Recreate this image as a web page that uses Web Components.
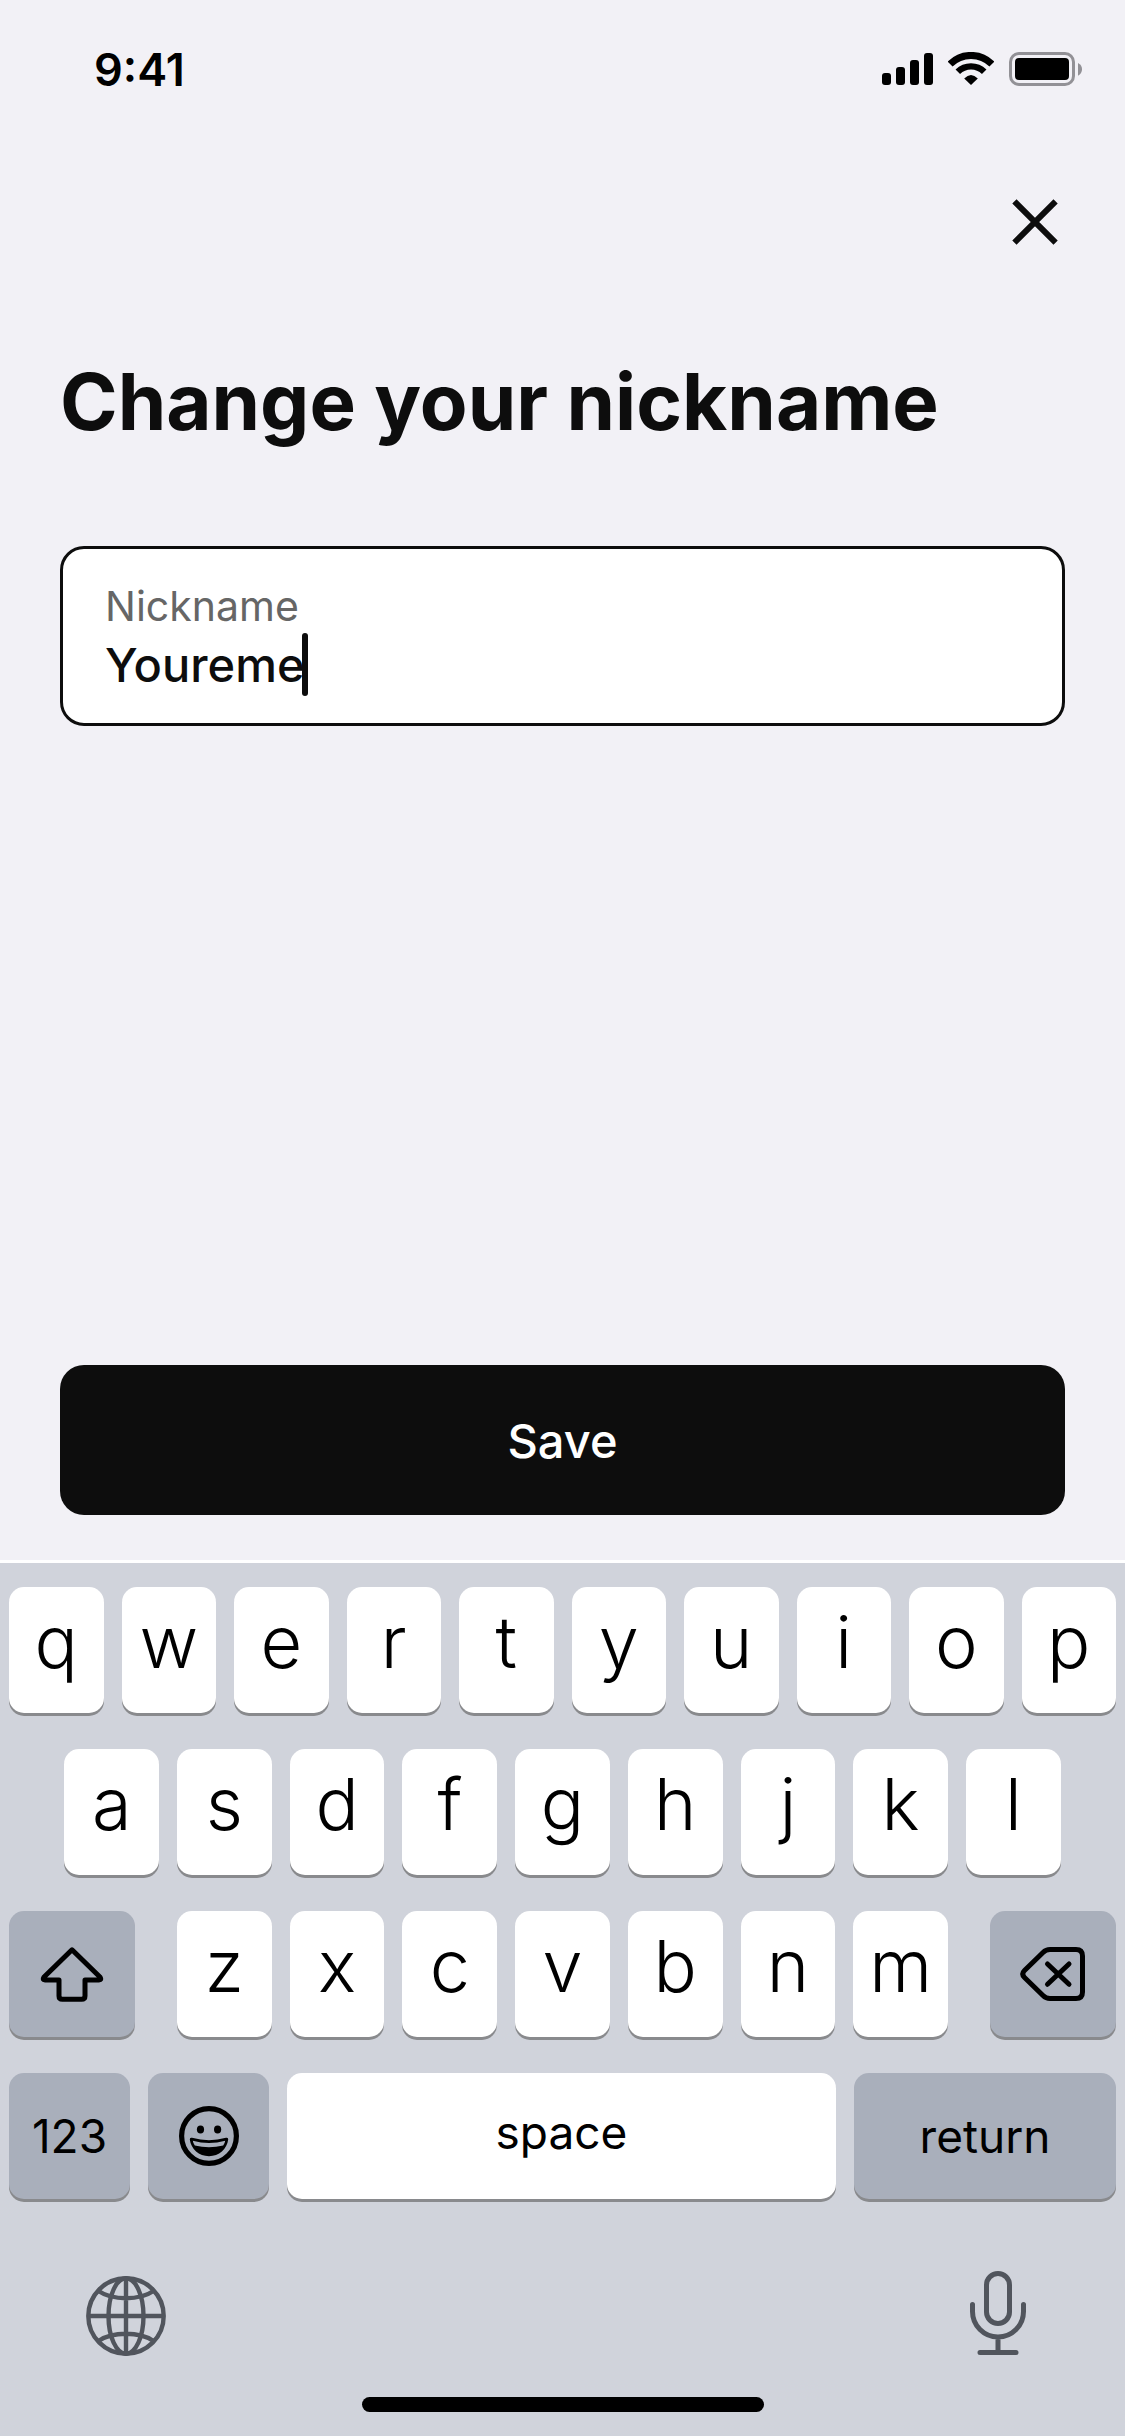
<!DOCTYPE html>
<html lang="en">
<head>
<meta charset="utf-8">
<meta name="viewport" content="width=device-width, initial-scale=1">
<title>Change your nickname</title>
<style>
  :root {
    --color-page: #f2f1f6;
    --color-ink: #0d0d0d;
    --color-muted: #666666;
    --color-white: #ffffff;
    --color-board: #d0d3db;
    --color-key-dark: #a9afbb;
    --color-key-edge: #898a8d;
    --color-tool: #51555d;
    --gutter: 60px;
    --radius: 24px;
  }

  body {
    margin: 0;
    background: var(--color-page);
    color: var(--color-ink);
    font-family: Inter, "Liberation Sans", sans-serif;
  }
</style>
</head>
<body>
<nickname-screen></nickname-screen>

<script>
/***************************
 * COMPONENT: ui-icon
 ***************************/

const icons = {
  signal: [51, 34, `
    <g fill="currentColor">
      <rect y="21" width="9" height="12" rx="3"/>
      <rect x="14" y="15" width="9" height="18" rx="3"/>
      <rect x="28" y="8" width="9" height="25" rx="3"/>
      <rect x="42" y="1" width="9" height="32" rx="3"/>
    </g>`],
  wifi: [46, 34, `
    <path d="M2.1 12.1A29.5 29.5 0 0 1 43.9 12.1" stroke="currentColor" stroke-width="7"/>
    <path d="M9.8 19.8A18.7 18.7 0 0 1 36.2 19.8" stroke="currentColor" stroke-width="6.4"/>
    <path d="M23 33L16.2 26.4Q23 19.4 29.8 26.4Z" fill="currentColor"/>`],
  battery: [73, 34, `
    <rect x="1.5" y="1.5" width="63" height="31" rx="8.5" stroke="#929196" stroke-width="3"/>
    <rect x="6" y="6" width="54" height="22" rx="4" fill="currentColor"/>
    <path d="M69 11Q73 13 73 17.3Q73 21.6 69 23.7Z" fill="#929196"/>`],
  close: [48, 48, `
    <path d="M3.4 3.4L44.6 44.6M44.6 3.4L3.4 44.6" stroke="currentColor" stroke-width="6"/>`],
  shift: [66, 56, `
    <path d="M33 3.8L4.8 31.3Q3 34 6 34H20V50Q20 53.3 23.4 53.3H42.6Q46 53.3 46 50V34H60Q63 34 61.2 31.3Z"
      stroke="currentColor" stroke-width="5" stroke-linejoin="round"/>`],
  erase: [66, 56, `
    <g stroke="currentColor" stroke-width="5" stroke-linejoin="round" stroke-linecap="round">
      <path d="M30 3.5H56Q62.5 3.5 62.5 10V46Q62.5 52.5 56 52.5H30Q26 52.5 23 49.5L4.5 31.5Q1 28 4.5 24.5L23 6.5Q26 3.5 30 3.5Z"/>
      <path d="M27.5 18L49 38.3M49 18L27.5 38.3"/>
    </g>`],
  smile: [60, 60, `
    <circle cx="30" cy="30" r="27.4" stroke="currentColor" stroke-width="5.2"/>
    <g fill="currentColor">
      <ellipse cx="21.5" cy="23.4" rx="3.6" ry="4"/>
      <ellipse cx="38.6" cy="23.4" rx="3.6" ry="4"/>
      <path fill-rule="evenodd" d="M10.8 33.5Q10.6 31.2 13 31.8Q30 36.6 47 31.8Q49.4 31.2 49.2 33.5C48 43 40 50.2 30 50.2S12 43 10.8 33.5Z
        M13.8 34.8Q14.3 37.8 15.8 39.4Q30 43 44.2 39.4Q45.7 37.8 46.2 34.8Q30 39.2 13.8 34.8Z"/>
    </g>`],
  globe: [80, 80, `
    <g stroke="currentColor" stroke-width="4.4">
      <circle cx="40" cy="40" r="37.7"/>
      <ellipse cx="40" cy="40" rx="17.5" ry="37.7"/>
      <path d="M40 2V78M2 40H78M12.5 15Q23 22.2 40 22.2T67.5 15M12.5 65Q23 57.8 40 57.8T67.5 65"/>
    </g>`],
  mic: [56, 86, `
    <g stroke="currentColor" stroke-width="5" stroke-linecap="round">
      <rect x="16.5" y="3.5" width="23" height="50" rx="11.5"/>
      <path d="M2.5 34.5V41.5A25.5 25.5 0 0 0 53.5 41.5V34.5M28 67V82M10 82.5H46"/>
    </g>`]
};

class UiIcon extends HTMLElement {
  constructor() {
    super();
    this.attachShadow({ mode: 'open' });
  }

  connectedCallback() {
    const [width, height, shapes] = icons[this.getAttribute('name')];

    this.shadowRoot.innerHTML = /*html*/ `
      <style>
        :host {
          display: block;
          flex: none;
        }

        svg {
          display: block;
        }
      </style>
      <svg width="${width}" height="${height}" viewBox="0 0 ${width} ${height}" fill="none" aria-hidden="true">${shapes}</svg>
    `;
  }
}

customElements.define('ui-icon', UiIcon);

/***************************
 * COMPONENT: status-bar
 ***************************/

class StatusBar extends HTMLElement {
  constructor() {
    super();

    this.attachShadow({ mode: 'open' });

    this.shadowRoot.innerHTML = /*html*/ `
      <style>
        :host {
          display: flex;
          align-items: center;
          justify-content: space-between;
          height: 138px;
          padding: 0 43px 0 94px;
          color: #000000;
          font-size: 45px;
          font-weight: 600;
        }

        .icons {
          display: flex;
          gap: 15px;
        }
      </style>
      <slot></slot>
      <div class="icons">
        <ui-icon name="signal"></ui-icon>
        <ui-icon name="wifi"></ui-icon>
        <ui-icon name="battery"></ui-icon>
      </div>
    `;
  }
}

customElements.define('status-bar', StatusBar);

/***************************
 * COMPONENT: icon-button
 ***************************/

class IconButton extends HTMLElement {
  constructor() {
    super();
    this.attachShadow({ mode: 'open' });
  }

  connectedCallback() {
    this.shadowRoot.innerHTML = /*html*/ `
      <style>
        :host {
          display: block;
        }

        button {
          display: flex;
          justify-content: center;
          align-items: var(--icon-align, center);
          width: var(--button-width, 72px);
          height: var(--button-height, 72px);
          padding: 0;
          border: 0;
          background: none;
          color: inherit;
          cursor: pointer;
        }
      </style>
      <button type="button" aria-label="${this.getAttribute('label')}">
        <ui-icon name="${this.getAttribute('icon')}"></ui-icon>
      </button>
    `;
  }
}

customElements.define('icon-button', IconButton);

/***************************
 * COMPONENT: text-field
 ***************************/

class TextField extends HTMLElement {
  constructor() {
    super();
    this.attachShadow({ mode: 'open' });
  }

  connectedCallback() {
    this.shadowRoot.innerHTML = /*html*/ `
      <style>
        :host {
          display: block;
          padding: 30px 42px 27px;
          border: 3px solid var(--color-ink);
          border-radius: var(--radius);
          background: var(--color-white);
        }

        label {
          display: block;
          color: var(--color-muted);
          font-size: 41px;
          line-height: 54px;
        }

        .row {
          display: flex;
          height: 63px;
        }

        input {
          field-sizing: content;
          min-width: 1px;
          max-width: 100%;
          height: 63px;
          padding: 0;
          border: 0;
          outline: 0;
          background: none;
          color: var(--color-ink);
          caret-color: transparent;
          font: 500 47px/63px Inter, "Liberation Sans", sans-serif;
        }

        .caret {
          flex: none;
          width: 6px;
          margin-left: -3px;
          border-radius: 3px;
          background: var(--color-ink);
        }
      </style>
      <label for="field"><slot></slot></label>
      <div class="row">
        <input id="field" type="text" autocomplete="off" value="${this.getAttribute('value')}">
        <span class="caret"></span>
      </div>
    `;

    this.addEventListener('click', () =>
      this.shadowRoot.getElementById('field').focus()
    );
  }
}

customElements.define('text-field', TextField);

/***************************
 * COMPONENT: primary-button
 ***************************/

class PrimaryButton extends HTMLElement {
  constructor() {
    super();

    this.attachShadow({ mode: 'open' });

    this.shadowRoot.innerHTML = /*html*/ `
      <style>
        :host {
          display: block;
        }

        button {
          width: 100%;
          height: 150px;
          border: 0;
          border-radius: var(--radius);
          background: var(--color-ink);
          color: var(--color-white);
          font: 500 47px/63px Inter, "Liberation Sans", sans-serif;
          cursor: pointer;
        }
      </style>
      <button type="button"><slot></slot></button>
    `;
  }
}

customElements.define('primary-button', PrimaryButton);

/***************************
 * COMPONENT: key-cap
 ***************************/

class KeyCap extends HTMLElement {
  constructor() {
    super();
    this.attachShadow({ mode: 'open' });
  }

  connectedCallback() {
    const label = this.getAttribute('label');

    this.shadowRoot.innerHTML = /*html*/ `
      <style>
        :host {
          display: block;
          flex: 1 1 0;
          min-width: 0;
        }

        button {
          display: flex;
          align-items: center;
          justify-content: center;
          box-sizing: border-box;
          width: 100%;
          height: 126px;
          padding: 0 0 16px;
          border: 0;
          border-radius: 15px;
          background: var(--color-white);
          box-shadow: 0 3px 0 var(--color-key-edge);
          color: #000000;
          font: 350 72px/90px Inter, "Liberation Sans", sans-serif;
          cursor: pointer;
        }

        :host([kind]) button {
          padding: 0;
          font-size: 46px;
          font-weight: 400;
        }

        :host([kind='space']) button {
          padding-bottom: 8px;
        }

        :host([kind='dark']) button {
          background: var(--color-key-dark);
        }
      </style>
      <button type="button" ${label ? `aria-label="${label}"` : ''}><slot></slot></button>
    `;
  }
}

customElements.define('key-cap', KeyCap);

/***************************
 * COMPONENT: key-board
 ***************************/

class KeyBoard extends HTMLElement {
  constructor() {
    super();

    this.attachShadow({ mode: 'open' });

    const caps = letters =>
      [...letters].map(letter => `<key-cap>${letter}</key-cap>`).join('');

    this.shadowRoot.innerHTML = /*html*/ `
      <style>
        :host {
          display: block;
          padding: 24px 9px;
          border-top: 3px solid var(--color-white);
          background: var(--color-board);
        }

        .keys {
          display: grid;
          gap: 36px;
        }

        .row {
          display: flex;
          gap: 18px;
        }

        .row--inset {
          padding: 0 5%;
        }

        .letters {
          display: flex;
          flex: 1;
          gap: 18px;
          margin: 0 24px;
        }

        .side {
          flex: 0 0 126px;
        }

        .small {
          flex: 0 0 121px;
        }

        .return {
          flex: 0 0 262px;
        }

        .tools {
          display: flex;
          justify-content: space-between;
          margin: 71px 76px 41px 75px;
          color: var(--color-tool);
          --button-width: 84px;
          --button-height: 86px;
          --icon-align: flex-end;
        }

        .home {
          width: 402px;
          height: 15px;
          margin: 0 auto;
          border-radius: 8px;
          background: #000000;
        }
      </style>
      <div class="keys">
        <div class="row">${caps('qwertyuiop')}</div>
        <div class="row row--inset">${caps('asdfghjkl')}</div>
        <div class="row">
          <key-cap class="side" kind="dark" label="Shift"><ui-icon name="shift"></ui-icon></key-cap>
          <div class="letters">${caps('zxcvbnm')}</div>
          <key-cap class="side" kind="dark" label="Delete"><ui-icon name="erase"></ui-icon></key-cap>
        </div>
        <div class="row">
          <key-cap class="small" kind="dark">123</key-cap>
          <key-cap class="small" kind="dark" label="Emoji"><ui-icon name="smile"></ui-icon></key-cap>
          <key-cap kind="space">space</key-cap>
          <key-cap class="return" kind="dark">return</key-cap>
        </div>
      </div>
      <div class="tools">
        <icon-button icon="globe" label="Next keyboard"></icon-button>
        <icon-button icon="mic" label="Dictate"></icon-button>
      </div>
      <div class="home"></div>
    `;
  }
}

customElements.define('key-board', KeyBoard);

/***************************
 * COMPONENT: nickname-screen
 ***************************/

class NicknameScreen extends HTMLElement {
  constructor() {
    super();

    this.attachShadow({ mode: 'open' });

    this.shadowRoot.innerHTML = /*html*/ `
      <style>
        :host {
          display: flex;
          flex-direction: column;
          min-height: 100vh;
        }

        header {
          display: flex;
          justify-content: flex-end;
          padding: 48px 54px 0;
        }

        main {
          display: flex;
          flex: 1;
          flex-direction: column;
          padding: 96px var(--gutter) 45px;
        }

        h1 {
          margin: 0 0 96px;
          font-size: 78px;
          font-weight: 700;
          line-height: 96px;
        }

        primary-button {
          margin-top: auto;
        }
      </style>
      <status-bar>9:41</status-bar>
      <header>
        <icon-button icon="close" label="Close"></icon-button>
      </header>
      <main>
        <h1>Change your nickname</h1>
        <text-field value="Youreme">Nickname</text-field>
        <primary-button>Save</primary-button>
      </main>
      <key-board></key-board>
    `;
  }
}

customElements.define('nickname-screen', NicknameScreen);
</script>
</body>
</html>
